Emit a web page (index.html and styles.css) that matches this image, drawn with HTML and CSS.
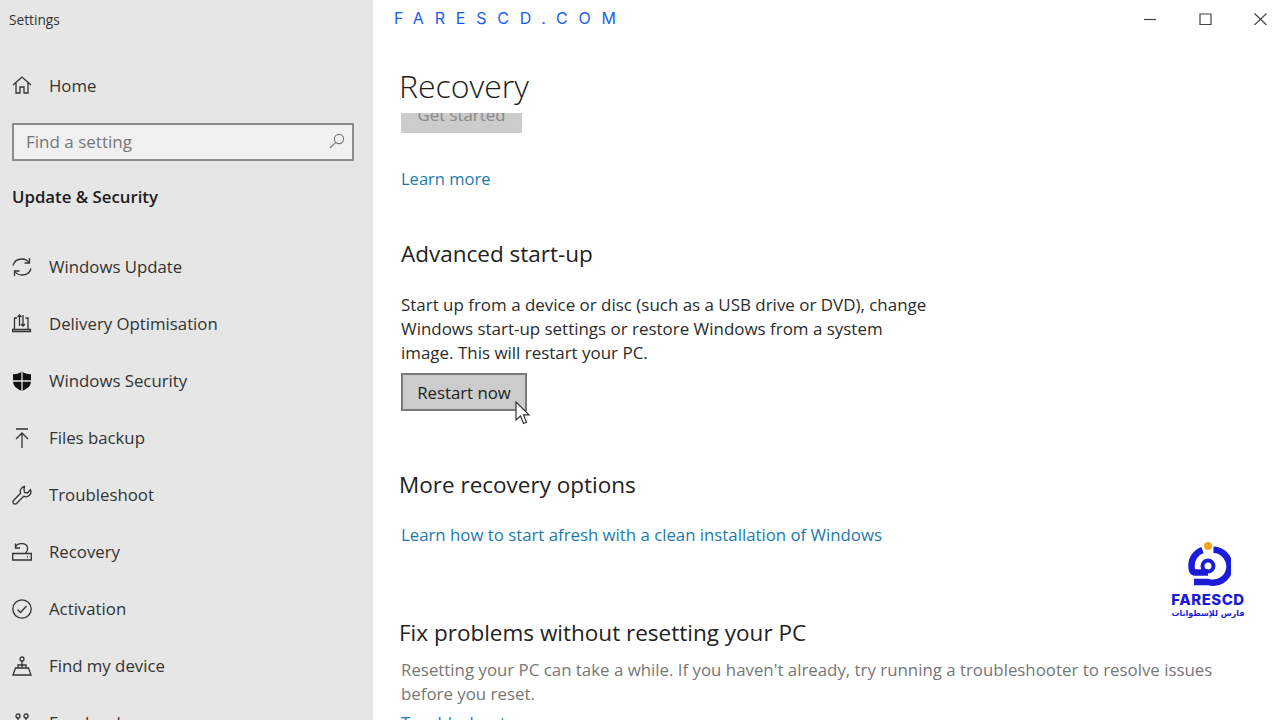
FILE: index.html
```html
<!DOCTYPE html>
<html lang="en">
<head>
<meta charset="utf-8">
<title>Settings</title>
<link rel="stylesheet" href="styles.css">
</head>
<body>
<div class="window">
  <aside class="sidebar">
    <div class="app-title">Settings</div>
    <a class="home nav-item">
      <svg class="icon" viewBox="0 0 20 20"><path d="M1 10 10 2l9 8M4 8v10h4v-6h4v6h4V8"/></svg>
      <span>Home</span>
    </a>
    <div class="search">
      <span>Find a setting</span>
      <svg class="search-icon" viewBox="0 0 16 16"><circle cx="10" cy="6" r="4.6"/><path d="M6.6 9.4 1 15"/></svg>
    </div>
    <div class="section-title">Update &amp; Security</div>
    <nav class="nav">
      <a class="nav-item">
        <svg class="icon" viewBox="0 0 20 20"><path d="M1 8.500C2 4.500 5.500 2 10 2c3 0 5.500 1.300 7 3.500M19 11.500c-1 4-4.500 6.500-9 6.500-3 0-5.500-1.300-7-3.500"/><path d="M17.500 1v5h-5M2.500 19v-5h5"/></svg>
        <span>Windows Update</span>
      </a>
      <a class="nav-item">
        <svg class="icon" viewBox="0 0 20 20"><path d="M2.500 15V4H5M16 15V4h-2.500M.5 15.500h18v2H.5zM7.500 12V1M5.500 3l2-2 2 2M11 1v11M9 10l2 2 2-2"/></svg>
        <span>Delivery Optimisation</span>
      </a>
      <a class="nav-item">
        <svg class="icon solid" viewBox="0 0 20 20"><path d="M10 .5c2.500 2 5 2.700 9 2.700v7C19 15 15 18 10 20 5 18 1 15 1 10.200v-7c4 0 6.500-.7 9-2.700z"/><path class="cut" d="M10 1v19M1 10h18"/></svg>
        <span>Windows Security</span>
      </a>
      <a class="nav-item">
        <svg class="icon" viewBox="0 0 20 20"><path d="M4 1h12M10 20V5M4 11l6-6 6 6"/></svg>
        <span>Files backup</span>
      </a>
      <a class="nav-item">
        <svg class="icon" viewBox="0 0 20 20"><path d="M12.500 1.500a5 5 0 0 0-3.900 6.800L1.500 15.500a2 2 0 0 0 3 3l7.200-7.300a5 5 0 0 0 6.800-6.500L15.500 8 12.500 7.500 12 4.500z"/></svg>
        <span>Troubleshoot</span>
      </a>
      <a class="nav-item">
        <svg class="icon" viewBox="0 0 20 20"><path d="M.7 11.500h18.600v6.500H.7zM3.500 5C5 1 14 0 15.500 5c.8 3-1 5-2 6.500M3.500 1.500V6h4.500M15 15h1"/></svg>
        <span>Recovery</span>
      </a>
      <a class="nav-item">
        <svg class="icon" viewBox="0 0 20 20"><circle cx="10" cy="10" r="9.200"/><path d="M5.500 10.500 8.500 13.500 14.500 7"/></svg>
        <span>Activation</span>
      </a>
      <a class="nav-item">
        <svg class="icon" viewBox="0 0 20 20"><circle cx="10" cy="3" r="2"/><path d="M10 5v7M1 19l2.500-7h13L19 19zM6 12V9h8v3"/></svg>
        <span>Find my device</span>
      </a>
      <a class="nav-item">
        <svg class="icon" viewBox="0 0 20 20"><circle cx="6" cy="3" r="2"/><circle cx="14" cy="3" r="2"/><path d="M6 5v5M14 5v5"/></svg>
        <span>For developers</span>
      </a>
    </nav>
  </aside>
  <main class="main">
    <header class="topbar">
      <div class="wordmark">FARESCD.COM</div>
      <div class="controls">
        <svg class="control" viewBox="0 0 46 12"><path d="M20 6.500h12"/></svg>
        <svg class="control" viewBox="0 0 46 12"><path d="M21 1h11v10.500H21z"/></svg>
        <svg class="control" viewBox="0 0 46 12"><path d="M20.500.5l12 11.500M32.500.5l-12 11.500"/></svg>
      </div>
    </header>
    <h1 class="page-title">Recovery</h1>
    <div class="scroller">
      <button class="btn btn-disabled">Get started</button>
      <a class="link learn-more">Learn more</a>
      <h2 class="sub advanced">Advanced start-up</h2>
      <p class="text">Start up from a device or disc (such as a USB drive or DVD), change Windows start-up settings or restore Windows from a system image. This will restart your PC.</p>
      <button class="btn btn-restart">Restart now</button>
      <h2 class="sub more">More recovery options</h2>
      <a class="link clean">Learn how to start afresh with a clean installation of Windows</a>
      <h2 class="sub fix">Fix problems without resetting your PC</h2>
      <p class="text muted">Resetting your PC can take a while. If you haven't already, try running a troubleshooter to resolve issues before you reset.</p>
      <a class="link trouble">Troubleshoot</a>
    </div>
  </main>
  <svg class="cursor" viewBox="0 0 16 24"><path d="M1 1v18l4.500-4 3 7.500 3-1.300-3-7.300H14z"/></svg>
  <div class="logo">
    <svg class="logo-mark" viewBox="0 0 46 50">
      <path class="ring" d="M28.500 8.800A16.500 16.500 0 1 1 23 41H9"/>
      <path class="ring" d="M17.500 9A16.500 16.500 0 0 0 6.500 25c0 4 1 6 3 6.500H23"/>
      <circle class="ring inner" cx="23" cy="25" r="5.500"/>
      <circle class="dot" cx="23" cy="5" r="4"/>
    </svg>
    <div class="logo-name">FARESCD</div>
    <div class="logo-ar" lang="ar" dir="rtl">فارس للإسطوانات</div>
  </div>
</div>
</body>
</html>
```
FILE: styles.css
```css
* { box-sizing: border-box; }
html, body { margin: 0; height: 720px; overflow: hidden; background: #fff; }
body { font-family: "Open Sans", "Noto Sans", sans-serif; color: #222; }

.window { position: relative; display: flex; width: 1280px; height: 720px; overflow: hidden; }

.sidebar { width: 373px; flex: none; height: 720px; overflow: hidden; background: #e6e6e6; padding: 0 0 0 12px; }
.app-title { font-size: 13.700px; line-height: 18px; padding-top: 11px; height: 29px; margin-left: -3px; color: #333; }
.nav-item { display: flex; align-items: center; gap: 17px; height: 57px; font-size: 16.8px; color: #333; }
.home { height: 24px; margin-top: 44px; }
.icon { width: 20px; height: 20px; flex: none; fill: none; stroke: #333; stroke-width: 1.300; }
.icon.solid { fill: #111; stroke: none; }
.icon .cut { fill: none; stroke: #e6e6e6; stroke-width: 1.300; }

.search { display: flex; align-items: center; justify-content: space-between; width: 342px; height: 38px; margin-top: 26px; padding: 0 7px 2px 12px; background: #f0f0f0; border: 2px solid #8c8c8c; font-size: 17px; color: #777; }
.search-icon { width: 16px; height: 16px; fill: none; stroke: #777; stroke-width: 1.100; }
.section-title { margin-top: 24px; font-size: 16.800px; line-height: 24px; font-weight: 600; color: #1c1c1c; }
.nav { margin-top: 29px; }

.main { flex: 1; min-width: 0; height: 720px; display: flex; flex-direction: column; }
.topbar { display: flex; justify-content: space-between; height: 36px; flex: none; padding: 10px 0 0 21px; }
.wordmark { font-family: Inter, "Noto Sans", sans-serif; font-size: 16px; line-height: 17px; letter-spacing: 10.800px; color: #1a5ee8; }
.controls { display: flex; gap: 9px; padding-top: 3px; }
.control { width: 46px; height: 12px; fill: none; stroke: #444; stroke-width: 1.200; }
.page-title { margin: 28px 0 0 26px; font-size: 32px; line-height: 44px; font-weight: 300; color: #1c1c1c; }
.scroller { flex: 1; min-height: 0; overflow: hidden; margin-top: 5px; padding: 0 0 0 28px; display: flex; flex-direction: column; align-items: flex-start; }

.btn { display: block; border: 0; font: inherit; font-size: 16.800px; color: #222; background: #ccc; padding: 0; }
.btn-disabled { width: 121px; height: 38px; margin-top: -18px; color: #888; flex: none; }
.link { font-size: 16.800px; line-height: 24px; color: #1a7ab0; }
.learn-more { margin-top: 34px; font-size: 16.500px; }
.sub { margin: 0; font-size: 22.500px; line-height: 30px; font-weight: 400; color: #222; }
.advanced { margin-top: 48px; }
.text { margin: 24px 0 0; width: 532px; font-size: 16.950px; line-height: 24px; color: #2b2b2b; }
.btn-restart { width: 126px; height: 38px; margin-top: 8px; border: 2px solid #7a7a7a; flex: none; }
.more { margin: 59px 0 0 -2px; }
.clean { margin-top: 23px; }
.fix { margin: 71px 0 0 -2px; }
.muted { width: 830px; margin-top: 10px; font-size: 16.850px; color: #777; }
.trouble { margin-top: 5px; }

.cursor { position: absolute; left: 515px; top: 401px; width: 16px; height: 24px; fill: #fff; stroke: #333; stroke-width: 1.200; }
.logo { position: absolute; left: 1168px; top: 541px; width: 80px; display: flex; flex-direction: column; align-items: center; }
.logo-mark { width: 46px; height: 50px; fill: none; }
.ring { stroke: #1c1cd8; stroke-width: 6.500; fill: none; }
.ring.inner { stroke-width: 4; }
.dot { fill: #f5a41d; }
.logo-name { font-family: Inter, sans-serif; font-size: 15px; line-height: 17px; font-weight: 800; letter-spacing: .5px; color: #1c1cd8; }
.logo-ar { font-family: "DejaVu Sans", sans-serif; font-size: 8px; line-height: 11px; font-weight: 700; white-space: nowrap; color: #1c1cd8; }
```
